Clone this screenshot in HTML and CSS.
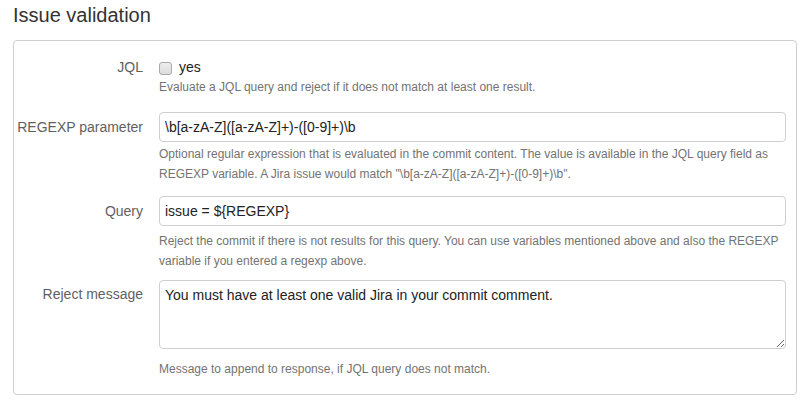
FILE: index.html
```html
<!DOCTYPE html>
<html>
<head>
<meta charset="utf-8">
<link rel="stylesheet" href="styles.css">
</head>
<body>
<h2 class="title">Issue validation</h2>
<div class="panel">
  <div class="group group-first">
    <label class="label label-plain" for="jql">JQL</label>
    <div class="control">
      <div class="check-line">
        <input type="checkbox" id="jql" class="check">
        <span class="check-text">yes</span>
      </div>
      <div class="help help-tight">Evaluate a JQL query and reject if it does not match at least one result.</div>
    </div>
  </div>
  <div class="group group-regexp">
    <label class="label" for="regexp">REGEXP parameter</label>
    <div class="control">
      <input type="text" id="regexp" class="input" value="\b[a-zA-Z]([a-zA-Z]+)-([0-9]+)\b">
      <div class="help help-regexp">Optional regular expression that is evaluated in the commit content. The value is available in the JQL query field as REGEXP variable. A Jira issue would match "\b[a-zA-Z]([a-zA-Z]+)-([0-9]+)\b".</div>
    </div>
  </div>
  <div class="group group-query">
    <label class="label" for="query">Query</label>
    <div class="control">
      <input type="text" id="query" class="input" value="issue = ${REGEXP}">
      <div class="help help-query">Reject the commit if there is not results for this query. You can use variables mentioned above and also the REGEXP variable if you entered a regexp above.</div>
    </div>
  </div>
  <div class="group group-message">
    <label class="label label-area" for="message">Reject message</label>
    <div class="control">
      <textarea id="message" class="area" spellcheck="false">You must have at least one valid Jira in your commit comment.</textarea>
      <div class="help help-area">Message to append to response, if JQL query does not match.</div>
    </div>
  </div>
</div>
</body>
</html>
```

FILE: styles.css
```css
* {
  box-sizing: border-box;
}

html, body {
  background: #fff;
}

body {
  margin: 0;
  padding: 4px 13px 0 13px;
  font-family: "Liberation Sans", Arial, sans-serif;
  font-size: 14px;
  line-height: 20px;
  color: #333;
}

.title {
  margin: 0 0 14px 0;
  font-size: 20px;
  line-height: 22px;
  font-weight: normal;
  color: #333;
}

.panel {
  border: 1px solid #cfcfcf;
  border-radius: 4px;
  padding: 16px 10px 15px 0;
}

.group {
  display: grid;
  grid-template-columns: 129px 1fr;
  column-gap: 16px;
}

.group-regexp {
  margin-top: 15px;
}

.group-query {
  margin-top: 12px;
}

.group-message {
  margin-top: 9px;
}

.label {
  text-align: right;
  color: #5f5f5f;
  padding-top: 5px;
  white-space: nowrap;
}

.label-plain {
  padding-top: 0;
}

.label-area {
  padding-top: 4px;
}

.control {
  min-width: 0;
}

.check-line {
  display: flex;
  align-items: center;
  height: 20px;
}

.check {
  -webkit-appearance: none;
  appearance: none;
  margin: 2px 7px 0 0;
  width: 13px;
  height: 13px;
  border: 1px solid #a9a9a9;
  border-radius: 3px;
  background: linear-gradient(#ededed, #dcdcdc);
}

.check-text {
  color: #222;
}

.input {
  display: block;
  width: 100%;
  height: 30px;
  margin: 0;
  padding: 0 5px;
  border: 1px solid #cfcfcf;
  border-radius: 4px;
  font-family: "Liberation Sans", Arial, sans-serif;
  font-size: 14px;
  color: #222;
  background: #fff;
  outline: none;
}

.area {
  display: block;
  width: 100%;
  height: 69px;
  margin: 0;
  padding: 4px 5px;
  border: 1px solid #cfcfcf;
  border-radius: 4px;
  font-family: "Liberation Sans", Arial, sans-serif;
  font-size: 14px;
  line-height: 20px;
  color: #222;
  background: #fff;
  resize: vertical;
  outline: none;
}

.help {
  font-size: 12px;
  line-height: 20px;
  color: #737373;
}

.help-tight {
  margin-top: 0;
}

.help-regexp {
  margin-top: 2px;
}

.help-query {
  margin-top: 5px;
}

.help-area {
  margin-top: 10px;
}
```
